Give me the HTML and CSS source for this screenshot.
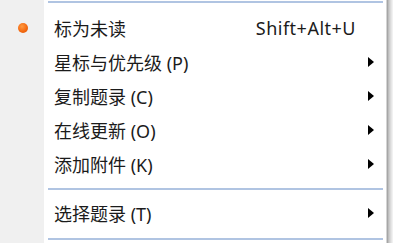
FILE: index.html
```html
<!DOCTYPE html>
<html lang="zh-CN">
<head>
<meta charset="utf-8">
<link rel="stylesheet" href="styles.css">
</head>
<body>
<div class="frame">
  <div class="menu">
    <div class="sep sep-top"></div>
    <div class="item">
      <span class="icon"><span class="dot"></span></span>
      <span class="label">标为未读</span>
      <span class="key">Shift+Alt+U</span>
      <span class="sub"></span>
    </div>
    <div class="item">
      <span class="icon"></span>
      <span class="label">星标与优先级 (P)</span>
      <span class="key"></span>
      <span class="sub"><span class="arrow"></span></span>
    </div>
    <div class="item">
      <span class="icon"></span>
      <span class="label">复制题录 (C)</span>
      <span class="key"></span>
      <span class="sub"><span class="arrow"></span></span>
    </div>
    <div class="item">
      <span class="icon"></span>
      <span class="label">在线更新 (O)</span>
      <span class="key"></span>
      <span class="sub"><span class="arrow"></span></span>
    </div>
    <div class="item">
      <span class="icon"></span>
      <span class="label">添加附件 (K)</span>
      <span class="key"></span>
      <span class="sub"><span class="arrow"></span></span>
    </div>
    <div class="sep sep-mid"></div>
    <div class="item">
      <span class="icon"></span>
      <span class="label">选择题录 (T)</span>
      <span class="key"></span>
      <span class="sub"><span class="arrow"></span></span>
    </div>
    <div class="sep sep-bottom"></div>
  </div>
  <div class="edge"></div>
</div>
</body>
</html>
```
FILE: styles.css
```css
html, body {
  margin: 0;
  padding: 0;
  background: #ffffff;
}

body {
  width: 398px;
  height: 243px;
  overflow: hidden;
  font-family: "Noto Sans", "Noto Sans CJK SC", sans-serif;
  font-size: 18px;
  color: #1b1b1b;
}

.frame {
  display: flex;
  height: 243px;
}

.menu {
  width: 386px;
  height: 243px;
  display: flex;
  flex-direction: column;
  background: linear-gradient(to right, #f0f0f0 0, #f0f0f0 44px, #ffffff 44px);
}

.edge {
  width: 7px;
  height: 243px;
  background: linear-gradient(to right,
    #d4d4d4 0, #d4d4d4 1px,
    #a6a6a6 1px, #a6a6a6 2px,
    #bdbdbd 2px, #bdbdbd 3px,
    #cdcdcd 3px, #cdcdcd 4px,
    #dadada 4px, #dadada 5px,
    #e6e6e6 5px, #e6e6e6 6px,
    #f1f1f1 6px);
}

.sep {
  height: 2px;
  margin-left: 48px;
  margin-right: 3px;
  background: #b0c4e2;
}

.sep-top {
  margin-top: 1px;
  margin-bottom: 8px;
}

.sep-mid {
  margin-top: 7px;
  margin-bottom: 6px;
}

.sep-bottom {
  margin-top: 8px;
}

.item {
  height: 34px;
  display: grid;
  grid-template-columns: 44px 1fr auto 30px;
  align-items: center;
}

.icon {
  display: flex;
  align-items: center;
  justify-content: center;
  padding-left: 2px;
}

.dot {
  width: 10px;
  height: 10px;
  border-radius: 50%;
  background: radial-gradient(circle at 40% 35%, #ff9a40 0, #f46a12 55%, #d85300 100%);
}

.label {
  padding-left: 10px;
  white-space: nowrap;
}

.key {
  white-space: nowrap;
  letter-spacing: 0.5px;
}

.sub {
  display: flex;
  align-items: center;
  padding-left: 12px;
}

.arrow {
  width: 0;
  height: 0;
  border-top: 5px solid transparent;
  border-bottom: 5px solid transparent;
  border-left: 6px solid #000000;
}
```
